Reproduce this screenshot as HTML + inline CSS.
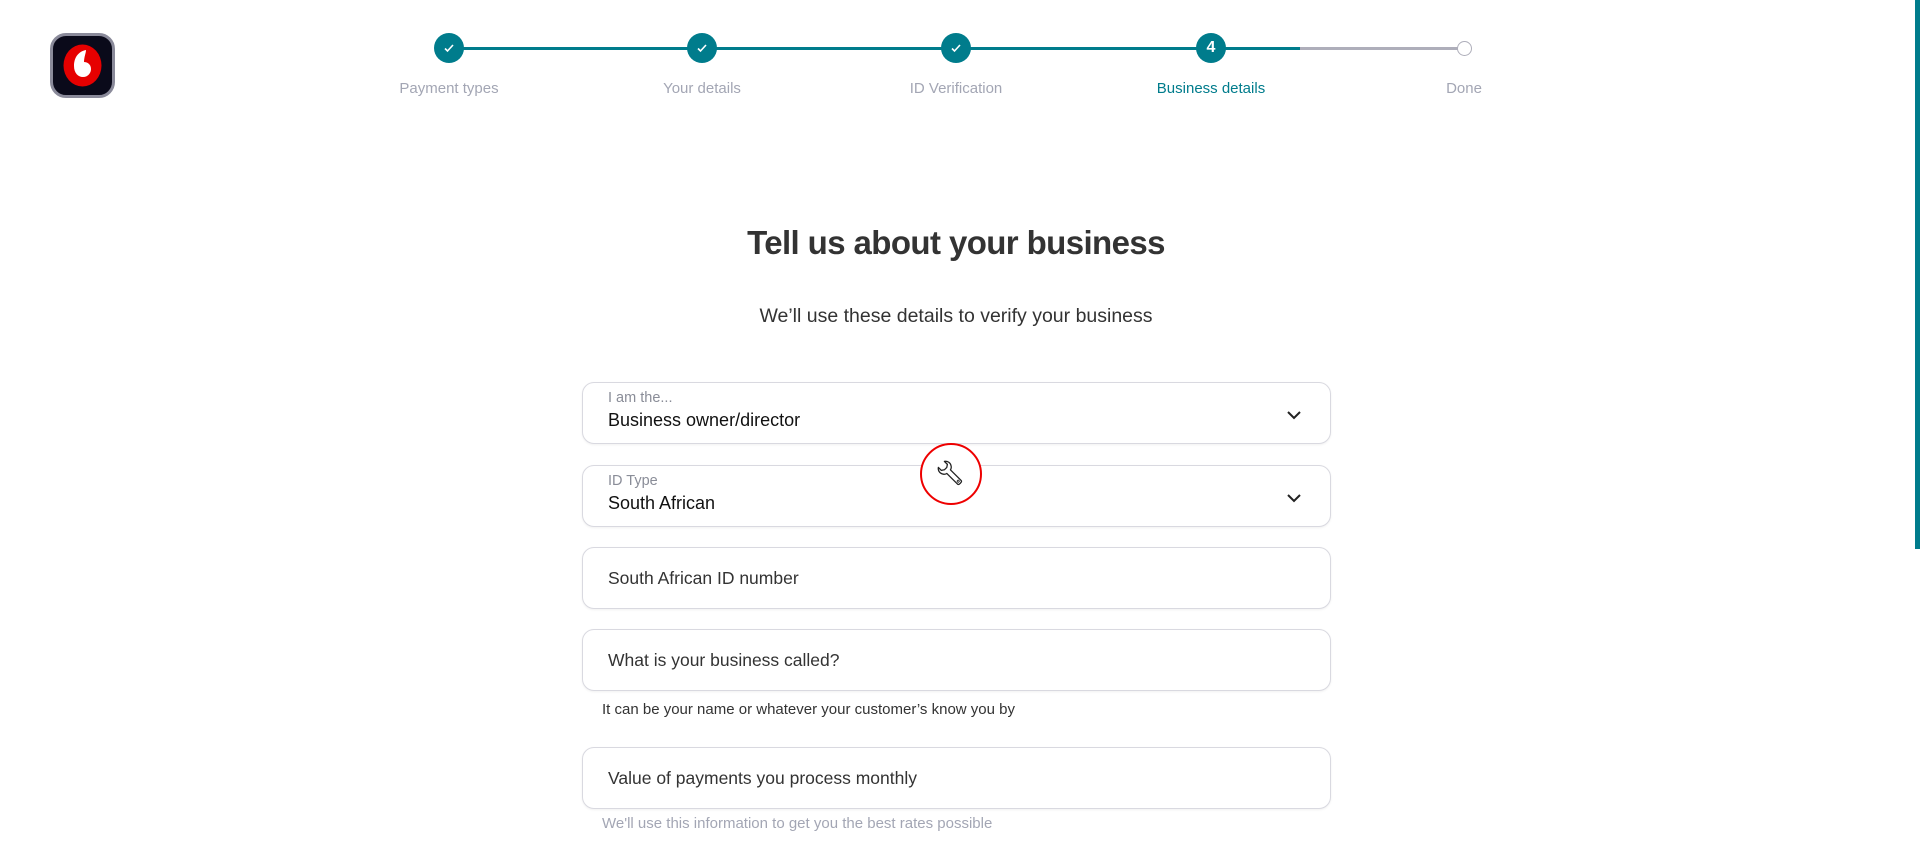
<!DOCTYPE html>
<html><head><meta charset="utf-8"><style>
*{box-sizing:border-box;margin:0;padding:0}
body{width:1920px;height:847px;overflow:hidden;background:#fff;font-family:"Liberation Sans",sans-serif;position:relative;color:#333}
.abs{position:absolute}
.logo{left:50px;top:33px;width:65px;height:65px;border-radius:16px;background:#0a0a1a;border:3px solid #8a8a9a}
.line{height:3px;top:47px}
.dot{width:30px;height:30px;border-radius:50%;background:#007c8c;top:33px;color:#fff;text-align:center;line-height:30px;font-size:16px;font-weight:bold}
.lbl{top:80px;font-size:15px;color:#a3a6b4;width:200px;text-align:center}
.field{left:582px;width:749px;height:62px;border:1px solid #d9d9e0;border-radius:12px;background:#fff;box-shadow:0 1px 2px rgba(0,0,0,.06)}
.sm{position:absolute;left:25px;top:7px;font-size:14.5px;color:#8a8d98}
.val{position:absolute;left:25px;top:27px;font-size:18px;color:#111}
.ph{position:absolute;left:25px;top:20px;font-size:17.5px;color:#333}
.chev{position:absolute;right:28px;top:27px}
.help{left:602px;font-size:15px}
</style></head><body>
<div class="abs logo"><svg width="59" height="59" viewBox="0 0 59 59" style="position:absolute;left:0;top:0"><ellipse cx="29.5" cy="29.5" rx="19" ry="21" fill="#e60000"/><path d="M33 14c-6 1-12 6-12 16 0 7 4 11 9 11s8-4 8-8c0-5-4-7-7-7 0-5 2-9 2-12z" fill="#fff"/></svg></div>

<div class="abs line" style="left:449px;width:851px;background:#007c8c"></div>
<div class="abs line" style="left:1300px;width:164px;background:#aeaeba"></div>
<div class="abs dot" style="left:434px"><svg width="14" height="14" viewBox="0 0 14 14" style="margin-top:8px"><path d="M3 7.5l2.5 2.5L11 4" stroke="#fff" stroke-width="1.6" fill="none"/></svg></div>
<div class="abs dot" style="left:687px"><svg width="14" height="14" viewBox="0 0 14 14" style="margin-top:8px"><path d="M3 7.5l2.5 2.5L11 4" stroke="#fff" stroke-width="1.6" fill="none"/></svg></div>
<div class="abs dot" style="left:941px"><svg width="14" height="14" viewBox="0 0 14 14" style="margin-top:8px"><path d="M3 7.5l2.5 2.5L11 4" stroke="#fff" stroke-width="1.6" fill="none"/></svg></div>
<div class="abs dot" style="left:1196px">4</div>
<div class="abs" style="left:1457px;top:41px;width:15px;height:15px;border-radius:50%;border:1.5px solid #aeaeba;background:#fff"></div>
<div class="abs lbl" style="left:349px">Payment types</div>
<div class="abs lbl" style="left:602px">Your details</div>
<div class="abs lbl" style="left:856px">ID Verification</div>
<div class="abs lbl" style="left:1111px;color:#007c8c">Business details</div>
<div class="abs lbl" style="left:1364px">Done</div>

<div class="abs" style="left:1915px;top:0;width:5px;height:549px;background:#007c8c"></div>

<div class="abs" style="left:0;width:1912px;top:224px;text-align:center;font-size:33px;font-weight:bold;color:#333;letter-spacing:-0.6px">Tell us about your business</div>
<div class="abs" style="left:0;width:1912px;top:305px;text-align:center;font-size:19.5px;color:#333">We’ll use these details to verify your business</div>

<div class="abs field" style="top:382px"><div class="sm">I am the...</div><div class="val">Business owner/director</div><svg class="chev" width="16" height="10" viewBox="0 0 16 10"><path d="M2 2l6 6 6-6" stroke="#222" stroke-width="2" fill="none"/></svg></div>
<div class="abs field" style="top:465px"><div class="sm">ID Type</div><div class="val">South African</div><svg class="chev" width="16" height="10" viewBox="0 0 16 10"><path d="M2 2l6 6 6-6" stroke="#222" stroke-width="2" fill="none"/></svg></div>
<div class="abs field" style="top:547px"><div class="ph">South African ID number</div></div>
<div class="abs field" style="top:629px"><div class="ph">What is your business called?</div></div>
<div class="abs help" style="top:701px;color:#333">It can be your name or whatever your customer’s know you by</div>
<div class="abs field" style="top:747px"><div class="ph">Value of payments you process monthly</div></div>
<div class="abs help" style="top:815px;color:#a3a6b4">We'll use this information to get you the best rates possible</div>

<div class="abs" style="left:920px;top:443px;width:62px;height:62px;border-radius:50%;border:2px solid #e00;background:#fff"><svg width="58" height="58" viewBox="0 0 58 58"><g transform="translate(29 29) rotate(-45) scale(0.85)"><path d="M-5,-16 L-5,-11 L-2,-9 L2,-9 L5,-11 L5,-16 C8,-14 9,-10 7,-7 C6,-5 4,-4 3,-4 L3,14 C3,16 -3,16 -3,14 L-3,-4 C-4,-4 -6,-5 -7,-7 C-9,-10 -8,-14 -5,-16 Z" fill="none" stroke="#222" stroke-width="1.5" stroke-linejoin="round"/><circle cx="0" cy="12" r="1.2" fill="none" stroke="#222" stroke-width="1"/></g></svg></div>
</body></html>
